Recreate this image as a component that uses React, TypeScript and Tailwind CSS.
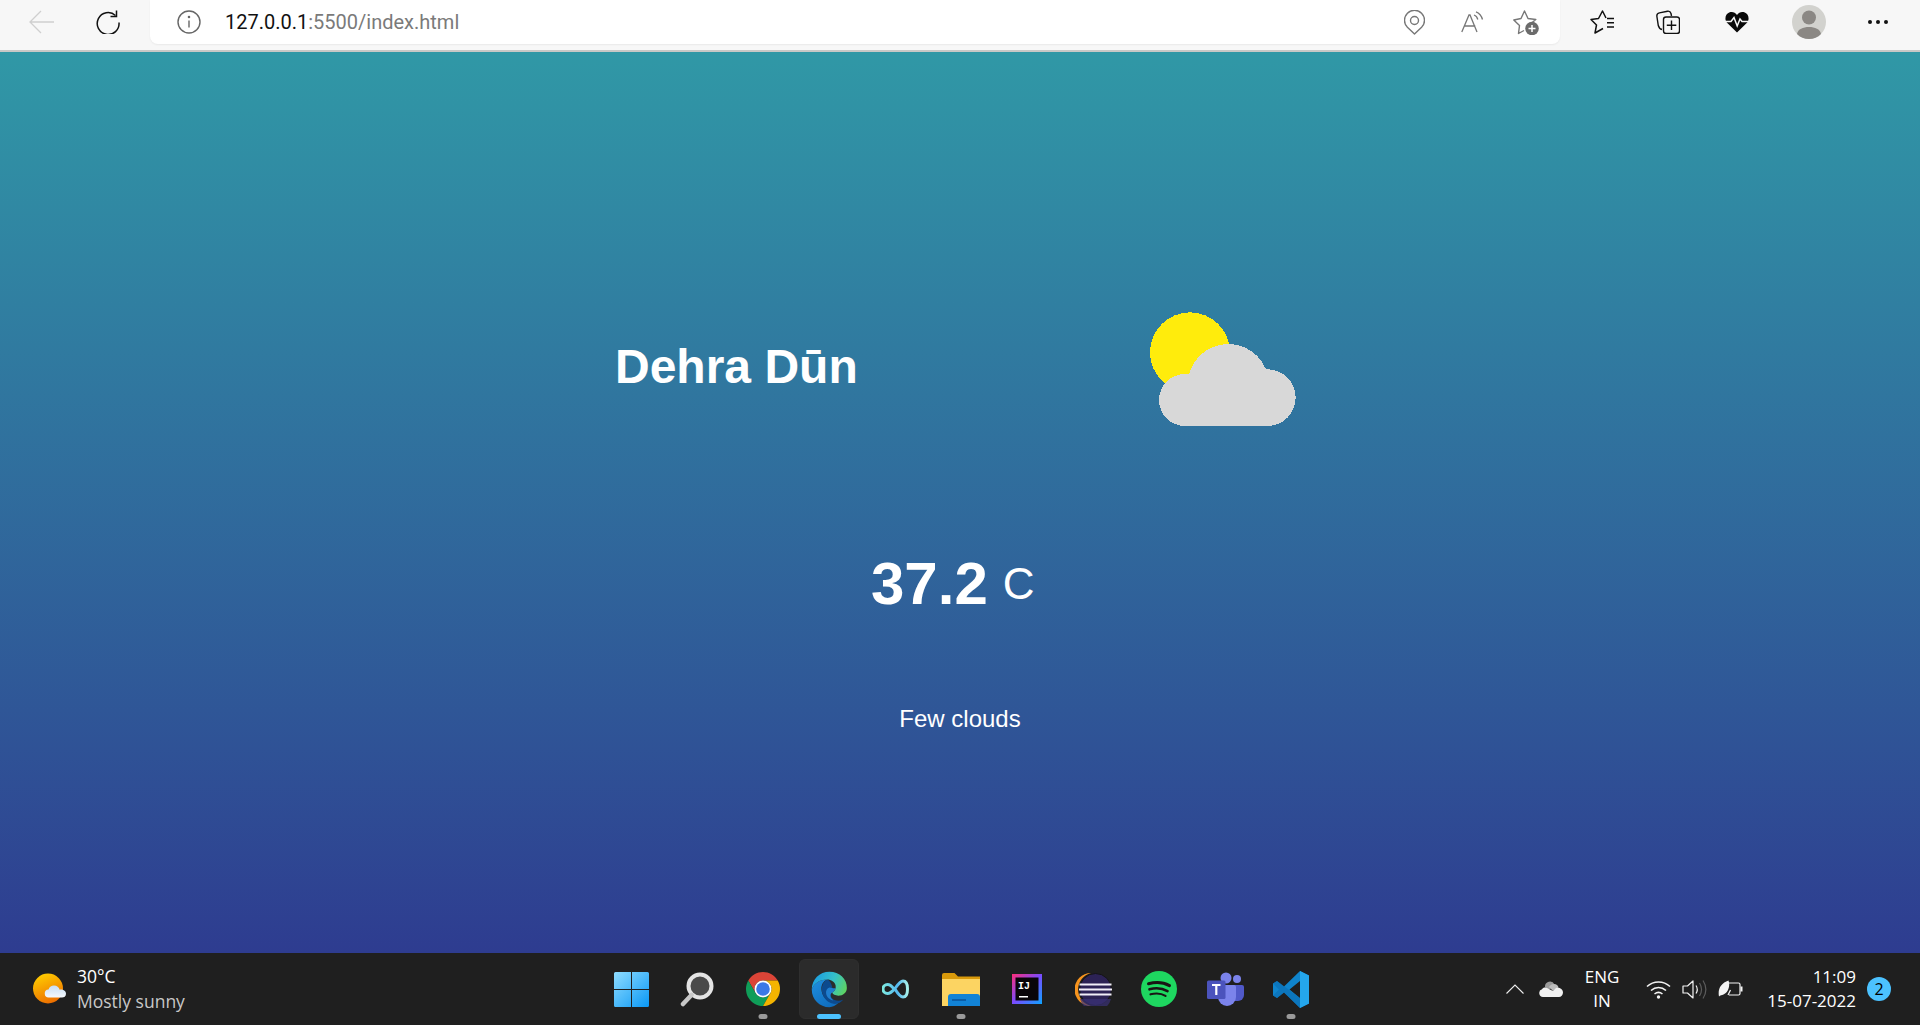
import React from "react";

const ui = { fontFamily: '"Open Sans", "Noto Sans", sans-serif' };

function WeatherArt() {
  return (
    <svg width="150" height="116" viewBox="54 36 450 348" shapeRendering="crispEdges">
      <circle cx="180" cy="157" r="120" fill="#ffec0c" />
      <g fill="#d8d8d8">
        <circle cx="165" cy="300" r="78" />
        <circle cx="412" cy="293" r="85" />
        <circle cx="295" cy="254" r="122" />
        <rect x="165" y="290" width="247" height="88" />
      </g>
    </svg>
  );
}

function Back() {
  return (
    <svg width="25" height="24" viewBox="0 0 25 24" fill="none" stroke="#cfcfcf" strokeWidth="1.3">
      <path d="M1 12h24M12 1 1 12l11 11" />
    </svg>
  );
}
function Reload() {
  return (
    <svg width="24" height="24" viewBox="0 0 24 24" fill="none" stroke="#111" strokeWidth="1.5">
      <path d="M19.500 5.500A10.900 10.900 0 1 0 23 12.500" />
      <path d="M20.500 .5V6.500H14.500" />
    </svg>
  );
}
function Info() {
  return (
    <svg width="24" height="24" viewBox="0 0 24 24" fill="none" stroke="#666" strokeWidth="1.400">
      <circle cx="12" cy="12" r="11" />
      <path d="M12 10.500v7" />
      <circle cx="12" cy="7" r=".6" fill="#666" />
    </svg>
  );
}
function Pin() {
  return (
    <svg width="21" height="25" viewBox="0 0 21 25" fill="none" stroke="#777" strokeWidth="1.400">
      <path d="M10.500 24 3.400 17.300A10 10 0 1 1 17.600 17.300Z" strokeLinejoin="round" />
      <circle cx="10.500" cy="10.500" r="4" />
    </svg>
  );
}
function ReadAloud() {
  return (
    <svg width="23" height="22" viewBox="0 0 23 22" fill="none" stroke="#777" strokeWidth="1.300">
      <path d="M.8 21 8 4h1l7 17M3.300 15h11" />
      <path d="M13 4c2 .7 3.300 2.200 3.800 4.500M15 .8c3.300 1.200 5.500 4 6.500 7.700" />
    </svg>
  );
}
function StarPlus() {
  return (
    <svg width="26" height="25" viewBox="0 0 26 25" fill="none">
      <path d="M18 13.500 22.800 9.500 15 8.500 11.500 1 8 8.500 .8 10 6.500 15.500 5.500 23.500 11 20.500" stroke="#777" strokeWidth="1.400" strokeLinejoin="round" />
      <circle cx="19" cy="18.500" r="6.800" fill="#6b6b6b" />
      <path d="M19 15v7M15.500 18.500h7" stroke="#fff" strokeWidth="1.500" />
    </svg>
  );
}
function Favorites() {
  return (
    <svg width="24" height="24" viewBox="0 0 24 24" fill="none" stroke="#111" strokeWidth="1.500" strokeLinejoin="round">
      <path d="M16 8 12.500 1 8.500 8.500 1 9.500 6.500 15 5 23 13 18.500" />
      <path d="M17 8.500h7M17 12.800h7M17 17h7" />
    </svg>
  );
}
function Collections() {
  return (
    <svg width="24" height="24" viewBox="0 0 24 24" fill="none" stroke="#111" strokeWidth="1.400">
      <path d="M6 19.500C3.500 18.800 2.800 17.500 2.300 15.500L.9 6.500C.6 4.500 1.500 3.300 3.400 2.900L11.500 1.200c1.900-.3 3 .6 3.500 2.300L15.500 6" />
      <rect x="7.500" y="7" width="16" height="16.500" rx="2.500" />
      <path d="M15.500 10.500v9.500M10.800 15.200h9.500" />
    </svg>
  );
}
function Heart() {
  return (
    <svg width="24" height="22" viewBox="0 0 24 22">
      <path d="M12 21.500 2 11.800C-.8 8.500.3 3 4.200 1.500 7.200.3 10.200 1.300 12 4c1.800-2.700 4.800-3.700 7.800-2.500 3.900 1.500 5 7 2.200 10.300Z" fill="#0a0a0a" />
      <path d="M0 10.500h6l3-4 3.200 8.500 2.800-7 2 2.500H24" fill="none" stroke="#f7f7f7" strokeWidth="1.500" />
    </svg>
  );
}
function Avatar() {
  return (
    <svg width="34" height="34" viewBox="0 0 34 34">
      <circle cx="17" cy="17" r="17" fill="#d2d2ce" />
      <circle cx="17" cy="12.500" r="7" fill="#8b8884" />
      <path d="M5 29C6 24 11 22 17 22s11 2 12 7c-3 3.500-7.500 5-12 5s-9-1.500-12-5Z" fill="#8b8884" />
    </svg>
  );
}

function TrayWeather() {
  return (
    <svg width="34" height="32" viewBox="0 0 34 32">
      <defs>
        <linearGradient id="wsun" x1="0.3" y1="0" x2="0.7" y2="1">
          <stop offset="0" stopColor="#ffcc00" />
          <stop offset="1" stopColor="#ec6a00" />
        </linearGradient>
        <linearGradient id="wcl" x1="0" y1="0" x2="0" y2="1">
          <stop offset="0" stopColor="#c7def6" />
          <stop offset="1" stopColor="#f5f8fc" />
        </linearGradient>
      </defs>
      <circle cx="15" cy="15.500" r="15" fill="url(#wsun)" />
      <path d="M16 24.500a4 4 0 0 1-.5-8c.8-2.500 3-4 5.500-4 3 0 5 1.800 5.700 4.200 3.500-.5 6.300 1.300 6.300 4s-2 3.800-4 3.800Z" fill="url(#wcl)" />
    </svg>
  );
}
function WindowsLogo() {
  return (
    <svg width="35" height="35" viewBox="0 0 35 35">
      <defs>
        <linearGradient id="win" x1="0" y1="0" x2="1" y2="1">
          <stop offset="0" stopColor="#8fdcff" />
          <stop offset="1" stopColor="#0a98f5" />
        </linearGradient>
      </defs>
      <path d="M1.500 0H17v17H0V1.500A1.500 1.500 0 0 1 1.500 0ZM18 0h15.500A1.500 1.500 0 0 1 35 1.500V17H18ZM0 18h17v17H1.500A1.500 1.500 0 0 1 0 33.500ZM18 18h17v15.500a1.500 1.500 0 0 1-1.500 1.500H18Z" fill="url(#win)" />
    </svg>
  );
}
function SearchIcon() {
  return (
    <svg width="34" height="35" viewBox="0 0 34 35">
      <circle cx="20" cy="14" r="11.500" fill="#4a4a4a" stroke="#e4e4e4" strokeWidth="4" />
      <path d="M11.500 23 3 32" stroke="#c8c8c8" strokeWidth="4.500" strokeLinecap="round" />
    </svg>
  );
}
function ChromeIcon() {
  return (
    <svg width="34" height="34" viewBox="4 4 40 40">
      <path d="M6.680 14A20 20 0 0 1 41.320 14H24A10 10 0 0 0 15.340 29Z" fill="#db4437" />
      <path d="M6.680 14A20 20 0 0 0 24 44L32.660 29A10 10 0 0 1 15.340 29Z" fill="#0f9d58" />
      <path d="M41.320 14A20 20 0 0 1 24 44L32.660 29A10 10 0 0 0 24 14Z" fill="#f4b400" />
      <circle cx="24" cy="24" r="10" fill="#fff" />
      <circle cx="24" cy="24" r="8" fill="#3b78e7" />
    </svg>
  );
}
function EdgeIcon() {
  return (
    <svg width="37" height="37" viewBox="0 0 48 48">
      <defs>
        <linearGradient id="edgeTop" x1="0" y1="0.400" x2="1" y2="0.700">
          <stop offset="0" stopColor="#1b9de2" />
          <stop offset="0.550" stopColor="#35c1c8" />
          <stop offset="1" stopColor="#5fd35f" />
        </linearGradient>
        <linearGradient id="edgeBase" x1="0" y1="0" x2="0.700" y2="1">
          <stop offset="0" stopColor="#1f8fe0" />
          <stop offset="1" stopColor="#0f6cbd" />
        </linearGradient>
      </defs>
      <path d="M1 24C4 16 11 11 21 11c-5 2-8 7-7.500 13 .5 8 7 16 15 17.500 3 .5 5 .5 7.500-.5C32 45 28 47 24 47 11 47 1 37 1 24Z" fill="url(#edgeBase)" />
      <path d="M21 11c-4 2-7 7-7 13 0 9 7 18 16 18.500 5 .3 9-1.500 12-5.500-5 2.500-12 2-15-2-2.500-3.500-1.500-8 1.500-10-1-6-3.500-13-7.500-14Z" fill="#0c4a8e" />
      <path d="M21 11c5 0 10 3 11 8 .5 3.500-1 7-4.500 9 .5 2.500 4 4 8 4 6 0 11-4 11-10C47 10.500 37 1 24 1 11 1 1 11 1 24 4 16 11 11 21 11Z" fill="url(#edgeTop)" />
      <path d="M27.500 28C24 30 24.500 35 29 38c-4-.2-9-4-9.500-9.500-.3-3 1.500-6 4.500-7 3 .5 5 1.500 8 .5-.5 2.500-2 4.500-4.500 6Z" fill="#1f7ed0" />
    </svg>
  );
}
function InfinityIcon() {
  return (
    <svg width="27" height="20" viewBox="0 0 27 20" fill="none" strokeWidth="3">
      <defs>
        <linearGradient id="inf" x1="0" y1="0" x2="1" y2="0">
          <stop offset="0" stopColor="#7de8e0" />
          <stop offset="0.600" stopColor="#54b8f0" />
          <stop offset="1" stopColor="#a6f0ea" />
        </linearGradient>
      </defs>
      <path d="M12 10C9.500 6.500 7.500 5.500 5.500 5.500a4.500 4.500 0 0 0 0 9c2 0 4-1 7.500-5 3.500-5 5.500-7.500 8-7.500 3 0 4.500 3.500 4.500 8s-1.500 8-4.500 8c-2.500 0-5-3-8-8Z" stroke="url(#inf)" />
    </svg>
  );
}
function FolderIcon() {
  return (
    <svg width="38" height="33" viewBox="0 0 38 33">
      <path d="M0 2a2 2 0 0 1 2-2h10.500L16 3.500H38V10H0Z" fill="#d99a0b" />
      <path d="M0 6h38v27H0Z" fill="#fcd462" />
      <path d="M6 33v-9a3 3 0 0 1 3-3h26a3 3 0 0 1 3 3v9Z" fill="#1283d6" />
      <path d="M10 27h14" stroke="#0a5ea8" strokeWidth="2" />
    </svg>
  );
}
function IntellijIcon() {
  return (
    <svg width="30" height="30" viewBox="0 0 30 30">
      <defs>
        <linearGradient id="ij" x1="0" y1="0" x2="1" y2="1">
          <stop offset="0" stopColor="#ff2d78" />
          <stop offset="0.500" stopColor="#7a4bff" />
          <stop offset="1" stopColor="#0da5ff" />
        </linearGradient>
      </defs>
      <rect width="30" height="30" fill="url(#ij)" />
      <rect x="3.500" y="3.500" width="23" height="23" fill="#090509" />
      <rect x="7" y="22" width="9" height="1.500" fill="#fff" />
      <text x="6" y="15" fontSize="10" fontWeight="700" fill="#fff" fontFamily="Liberation Mono, monospace">IJ</text>
    </svg>
  );
}
function EclipseIcon() {
  return (
    <svg width="37" height="33" viewBox="0 0 37 33">
      <path d="M16 0A16.500 16.500 0 0 0 16 33 17 17 0 0 1 16 0Z" fill="#f7941e" />
      <circle cx="20.500" cy="16.500" r="16" fill="#2c2255" stroke="#141414" strokeWidth="1" />
      <path d="M5 26a16 16 0 0 0 31 0Z" fill="#3b3278" opacity="0.700" />
      <path d="M4.500 11.500h32M4 16.500h33M4.500 21.500h32" stroke="#f1eef8" strokeWidth="2" />
    </svg>
  );
}
function SpotifyIcon() {
  return (
    <svg width="36" height="36" viewBox="0 0 36 36" fill="none" stroke="#191414" strokeLinecap="round">
      <circle cx="18" cy="18" r="18" fill="#1ed760" stroke="none" />
      <path d="M7.500 12.800c7-2 15-1.500 21 1.800" strokeWidth="3" />
      <path d="M8.500 18.300c6-1.600 13-1 18 1.900" strokeWidth="2.600" />
      <path d="M9.500 23.300c5-1.200 11-.9 15 1.600" strokeWidth="2.200" />
    </svg>
  );
}
function TeamsIcon() {
  return (
    <svg width="37" height="34" viewBox="0 0 37 34">
      <circle cx="30" cy="7" r="4" fill="#7b83eb" />
      <path d="M24 13h11a2 2 0 0 1 2 2v8a6 6 0 0 1-6 6h-5Z" fill="#5059c9" />
      <circle cx="19" cy="6" r="5.500" fill="#7b83eb" />
      <path d="M11 13h16a2 2 0 0 1 2 2v10a9 9 0 0 1-18 0Z" fill="#7b83eb" />
      <rect y="8.500" width="18.500" height="18.500" rx="1.500" fill="#4b53bc" />
      <path d="M5 13h8.500M9.300 13v10" stroke="#fff" strokeWidth="2.200" />
    </svg>
  );
}
function VSCodeIcon() {
  return (
    <svg width="37" height="37" viewBox="0 0 37 37">
      <path d="M27 0 36 4.500V32.500L27 37 11 21.500 4 27 0 24.500V12.500L4 10 11 15.500ZM27 10 16.500 18.500 27 27Z" fill="#0f84cc" fillRule="evenodd" />
      <path d="M27 0 36 4.500V32.500L27 37Z" fill="#24a6ec" />
      <path d="M0 12.500 4 10 27 27V37L11 21.500 4 27 0 24.500 6 18.500Z" fill="#0a6db3" opacity="0.600" />
    </svg>
  );
}

function Chevron() {
  return (
    <svg width="18" height="10" viewBox="0 0 18 10" fill="none" stroke="#eee" strokeWidth="1.100">
      <path d="M.5 9.500 9 1l8.500 8.500" />
    </svg>
  );
}
function OneDrive() {
  return (
    <svg width="24" height="16" viewBox="0 0 24 16">
      <path d="M6 6a5 5 0 0 1 9.500-2.500L13 7 8 9Z" fill="#9a9a9a" />
      <path d="M10 6c1-2 3-3 5-3 2.500 0 4 1.500 4.500 3.500L14 10Z" fill="#bdbdbd" />
      <path d="M4 16a4 4 0 0 1-1-7.800C4 6.500 6 6 8 7l6 3 3-3c3-1 7 .8 7 4.500 0 2.500-2 4.500-4 4.500Z" fill="#f0f0f0" />
    </svg>
  );
}
function Wifi() {
  return (
    <svg width="25" height="19" viewBox="0 0 25 19" fill="none" stroke="#f3f3f3" strokeWidth="1.600">
      <path d="M1 6.500c6.500-6 16.500-6 23 0M5 10.500c4.500-4 10.500-4 15 0M8.500 14c2.500-2 5.500-2 8 0" />
      <circle cx="12.500" cy="17" r="1.700" fill="#f3f3f3" stroke="none" />
    </svg>
  );
}
function Speaker() {
  return (
    <svg width="25" height="21" viewBox="0 0 25 21" fill="none" strokeWidth="1.200">
      <path d="M1 7h4.500L11 2v17l-5.500-5H1Z" stroke="#f3f3f3" strokeLinejoin="round" />
      <path d="M14 6.500c1.600 2.500 1.600 5.500 0 8" stroke="#f3f3f3" />
      <path d="M17.500 4c2.500 4 2.500 9 0 13M21 1.500c3.500 5.500 3.500 12.500 0 18" stroke="#5d5d5d" />
    </svg>
  );
}
function Battery() {
  return (
    <svg width="25" height="18" viewBox="0 0 25 18" fill="none">
      <path d="M8 3h12.500a1.500 1.500 0 0 1 1.500 1.500v9a1.500 1.500 0 0 1-1.500 1.500H11" stroke="#f3f3f3" strokeWidth="1.200" />
      <rect x="22.500" y="6.500" width="2" height="5" fill="#f3f3f3" />
      <path d="M1 16.500C-.5 9 3 3 10.500.5c2 5.500-.5 12.500-5 14-1.800.6-3.300 1-4.500 2Z" fill="#f3f3f3" />
      <path d="M10 15 12.500 10" stroke="#f3f3f3" strokeWidth="1.200" />
    </svg>
  );
}

const apps: [React.ReactNode, string][] = [
  [<WindowsLogo />, ""],
  [<SearchIcon />, ""],
  [<ChromeIcon />, "open"],
  [<EdgeIcon />, "active"],
  [<InfinityIcon />, ""],
  [<FolderIcon />, "open"],
  [<IntellijIcon />, ""],
  [<EclipseIcon />, ""],
  [<SpotifyIcon />, ""],
  [<TeamsIcon />, ""],
  [<VSCodeIcon />, "open"],
];

export default function App() {
  return (
    <div className="flex h-[1025px] w-full flex-col overflow-hidden" style={ui}>
      <header className="flex h-[52px] shrink-0 items-start border-b-2 border-[#c8c8c6] bg-[#f7f7f7]">
        <div className="flex h-[44px] w-[150px] items-center">
          <div className="ml-[29px] flex w-[67px]"><Back /></div>
          <Reload />
        </div>
        <div className="flex h-[44px] w-[1410px] items-center rounded-b-lg bg-white pl-[27px] shadow-[0_1px_2px_rgba(0,0,0,0.06)]">
          <Info />
          <div
            className="ml-[24px] text-[20px] leading-none text-[#7a7a7a]"
            style={{ fontFamily: 'Roboto, "Open Sans", sans-serif' }}
          >
            <span className="text-[#111]">127.0.0.1</span>:5500/index.html
          </div>
          <div className="ml-auto flex items-center">
            <div className="mr-[36px]"><Pin /></div>
            <div className="mr-[29px]"><ReadAloud /></div>
            <div className="mr-[21px]"><StarPlus /></div>
          </div>
        </div>
        <div className="flex h-[44px] flex-1 items-center">
          <div className="ml-[30px]"><Favorites /></div>
          <div className="ml-[42px]"><Collections /></div>
          <div className="ml-[45px]"><Heart /></div>
          <div className="ml-[43px]"><Avatar /></div>
          <div className="ml-[42px] flex gap-[4px]">
            <span className="h-[4px] w-[4px] rounded-full bg-[#111]" />
            <span className="h-[4px] w-[4px] rounded-full bg-[#111]" />
            <span className="h-[4px] w-[4px] rounded-full bg-[#111]" />
          </div>
        </div>
      </header>

      <main
        className="flex flex-1 flex-col bg-gradient-to-b from-[#3098a6] to-[#2e3c90] text-white"
        style={{ fontFamily: '"Liberation Sans", Arial, sans-serif' }}
      >
        <div className="ml-[615px] mt-[260px] flex h-[116px] w-[683px] items-center justify-between">
          <h1 className="mb-[7px] text-[48px] font-bold leading-none">Dehra Dūn</h1>
          <WeatherArt />
        </div>
        <div className="ml-[871px] mt-[126px] flex items-center gap-[15px] leading-none">
          <span className="text-[60px] font-bold">37.2</span>
          <span className="text-[44px]">C</span>
        </div>
        <p className="mt-[93px] text-center text-[24px] leading-none">Few clouds</p>
      </main>

      <footer className="relative flex h-[72px] shrink-0 items-center bg-[#1f1f1f] text-white">
        <div className="flex w-[598px] items-center pl-[33px]">
          <TrayWeather />
          <div className="ml-[10px] text-[17.500px] leading-[25px]">
            <div>30°C</div>
            <div className="text-[#c8c8c8]">Mostly sunny</div>
          </div>
        </div>
        <div className="flex h-full items-center">
          {apps.map(([icon, state], i) => (
            <div key={i} className="relative flex h-[60px] w-[66px] items-center justify-center">
              {state === "active" && (
                <span className="absolute inset-x-[3px] inset-y-0 rounded-md border border-[#2f2f2f] bg-[#2b2b2b]" />
              )}
              <span className="relative">{icon}</span>
              {state === "open" && (
                <span className="absolute bottom-[0px] left-1/2 h-[5px] w-[9px] -translate-x-1/2 rounded-full bg-[#9a9a9a]" />
              )}
              {state === "active" && (
                <span className="absolute bottom-[0px] left-1/2 h-[5px] w-[24px] -translate-x-1/2 rounded-full bg-[#4cc2ff]" />
              )}
            </div>
          ))}
        </div>
        <div className="flex flex-1 items-center">
          <div className="ml-[182px]"><Chevron /></div>
          <div className="ml-[15px]"><OneDrive /></div>
          <div className="ml-[20px] w-[38px] text-center text-[17px] leading-[24px]">
            <div>ENG</div>
            <div>IN</div>
          </div>
          <div className="ml-[25px]"><Wifi /></div>
          <div className="ml-[11px]"><Speaker /></div>
          <div className="ml-[11px]"><Battery /></div>
          <div className="ml-[22px] flex w-[91px] flex-col items-end whitespace-nowrap text-[17px] leading-[24px]">
            <div>11:09</div>
            <div>15-07-2022</div>
          </div>
          <div className="ml-[11px] flex h-[24px] w-[24px] items-center justify-center rounded-full bg-[#4cc2ff] text-[16px] text-black">2</div>
        </div>
      </footer>
    </div>
  );
}
